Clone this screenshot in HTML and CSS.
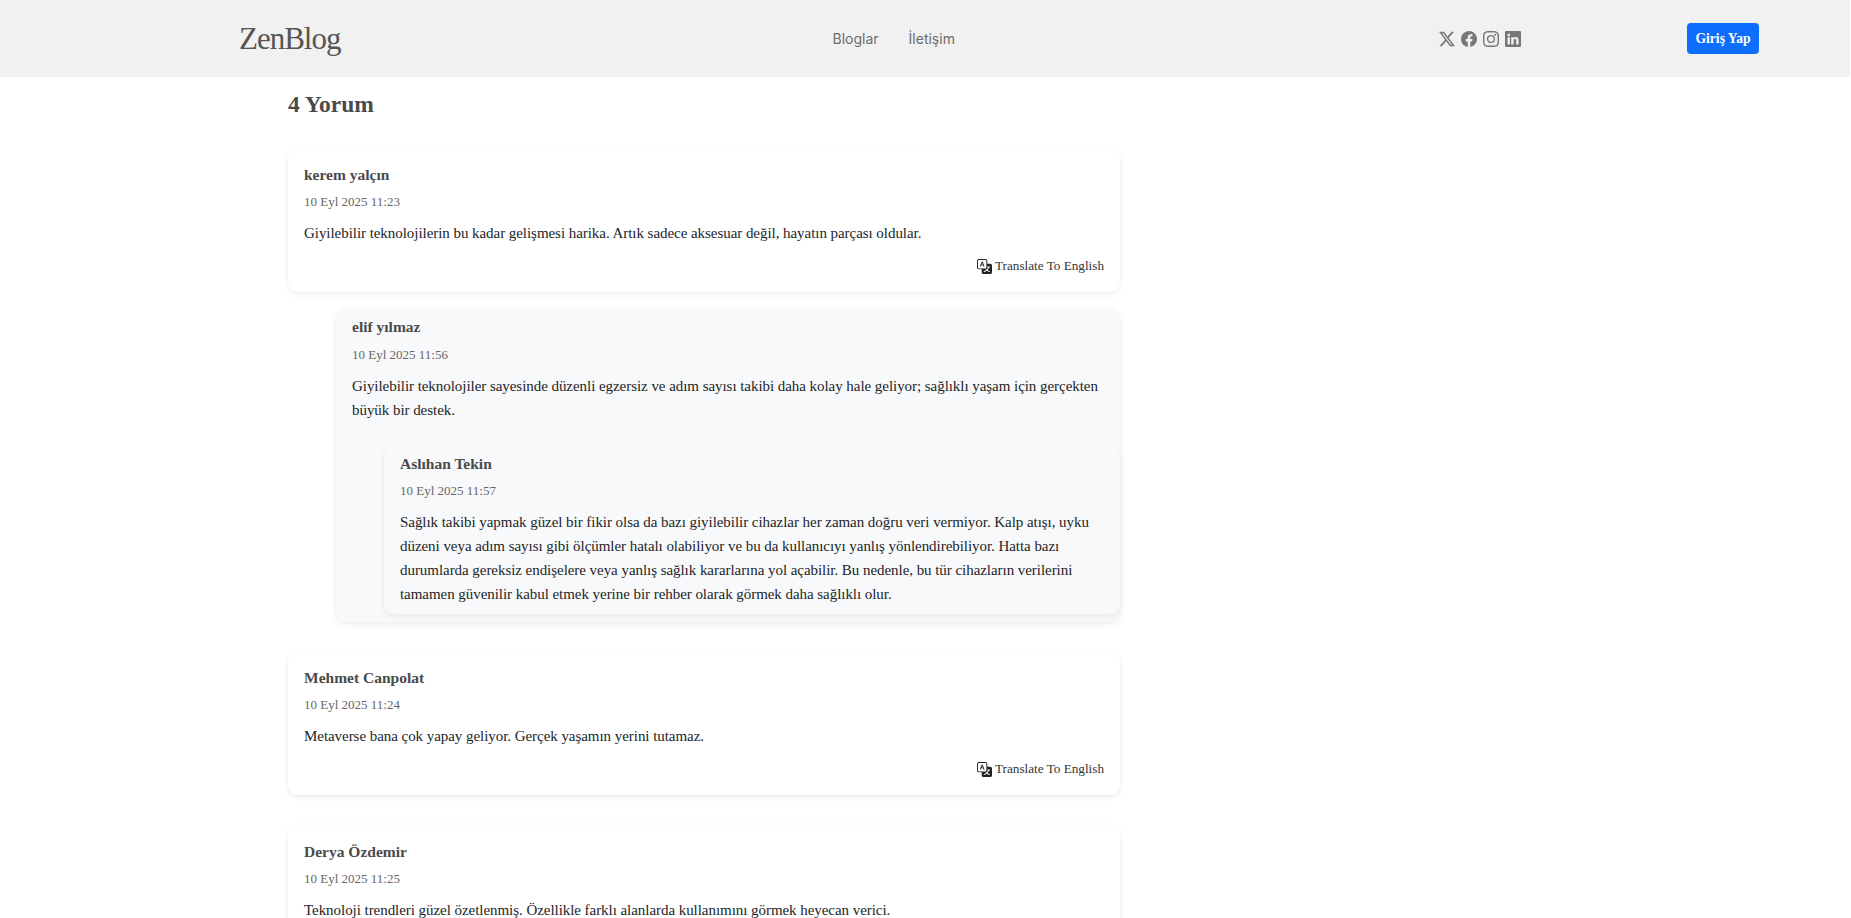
FILE: index.html
```html
<!DOCTYPE html>
<html lang="tr">
<head>
  <meta charset="UTF-8">
  <meta name="viewport" content="width=device-width, initial-scale=1.0">
  <title>ZenBlog</title>
  <link rel="stylesheet" href="styles.css">
</head>
<body>

<header class="site-header">
  <a class="logo" href="#">ZenBlog</a>
  <nav class="main-nav">
    <a href="#">Bloglar</a>
    <a href="#">İletişim</a>
  </nav>
  <div class="social">
    <a href="#" aria-label="X"><svg viewBox="0 0 16 16"><path d="M12.6.75h2.454l-5.36 6.142L16 15.25h-4.937l-3.867-5.07-4.425 5.07H.316l5.733-6.57L0 .75h5.063l3.495 4.633L12.601.75Zm-.86 13.028h1.36L4.323 2.145H2.865z"/></svg></a>
    <a href="#" aria-label="Facebook"><svg viewBox="0 0 16 16"><path d="M16 8.049c0-4.446-3.582-8.05-8-8.05C3.58 0-.002 3.603-.002 8.05c0 4.017 2.926 7.347 6.75 7.951v-5.625h-2.03V8.05H6.75V6.275c0-2.017 1.195-3.131 3.022-3.131.876 0 1.791.157 1.791.157v1.98h-1.009c-.993 0-1.303.621-1.303 1.258v1.51h2.218l-.354 2.326H9.25V16c3.824-.604 6.75-3.934 6.75-7.951"/></svg></a>
    <a href="#" aria-label="Instagram"><svg viewBox="0 0 16 16"><path d="M8 0C5.829 0 5.556.01 4.703.048 3.85.088 3.269.222 2.76.42a3.9 3.9 0 0 0-1.417.923A3.9 3.9 0 0 0 .42 2.76C.222 3.268.087 3.85.048 4.7.01 5.555 0 5.827 0 8.001c0 2.172.01 2.444.048 3.297.04.852.174 1.433.372 1.942.205.526.478.972.923 1.417.444.445.89.719 1.416.923.51.198 1.09.333 1.942.372C5.555 15.99 5.827 16 8 16s2.444-.01 3.298-.048c.851-.04 1.434-.174 1.943-.372a3.9 3.9 0 0 0 1.416-.923c.445-.445.718-.891.923-1.417.197-.509.332-1.09.372-1.942C15.99 10.445 16 10.173 16 8s-.01-2.445-.048-3.299c-.04-.851-.175-1.433-.372-1.941a3.9 3.9 0 0 0-.923-1.417A3.9 3.9 0 0 0 13.24.42c-.51-.198-1.092-.333-1.943-.372C10.443.01 10.172 0 7.998 0zm-.717 1.442h.718c2.136 0 2.389.007 3.232.046.78.035 1.204.166 1.486.275.373.145.64.319.92.599s.453.546.598.92c.11.281.24.705.275 1.485.039.843.047 1.096.047 3.231s-.008 2.389-.047 3.232c-.035.78-.166 1.203-.275 1.485a2.5 2.5 0 0 1-.599.919c-.28.28-.546.453-.92.598-.28.11-.704.24-1.485.276-.843.038-1.096.047-3.232.047s-2.39-.009-3.233-.047c-.78-.036-1.203-.166-1.485-.276a2.5 2.5 0 0 1-.92-.598 2.5 2.5 0 0 1-.6-.92c-.109-.281-.24-.705-.275-1.485-.038-.843-.046-1.096-.046-3.233s.008-2.388.046-3.231c.036-.78.166-1.204.276-1.486.145-.373.319-.64.599-.92s.546-.453.92-.598c.282-.11.705-.24 1.485-.276.738-.034 1.024-.044 2.515-.045zm4.988 1.328a.96.96 0 1 0 0 1.92.96.96 0 0 0 0-1.92m-4.27 1.122a4.109 4.109 0 1 0 0 8.217 4.109 4.109 0 0 0 0-8.217m0 1.441a2.667 2.667 0 1 1 0 5.334 2.667 2.667 0 0 1 0-5.334"/></svg></a>
    <a href="#" aria-label="LinkedIn"><svg viewBox="0 0 16 16"><path d="M0 1.146C0 .513.526 0 1.175 0h13.65C15.474 0 16 .513 16 1.146v13.708c0 .633-.526 1.146-1.175 1.146H1.175C.526 16 0 15.487 0 14.854zm4.943 12.248V6.169H2.542v7.225zm-1.2-8.212c.837 0 1.358-.554 1.358-1.248-.015-.709-.52-1.248-1.342-1.248S2.4 3.226 2.4 3.934c0 .694.521 1.248 1.327 1.248zm4.908 8.212V9.359c0-.216.016-.432.08-.586.173-.431.568-.878 1.232-.878.869 0 1.216.662 1.216 1.634v3.865h2.401V9.25c0-2.22-1.184-3.252-2.764-3.252-1.274 0-1.845.7-2.165 1.193v.025h-.016l.016-.025V6.169h-2.4c.03.678 0 7.225 0 7.225z"/></svg></a>
  </div>
  <button class="login-btn">Giriş Yap</button>
</header>

<main class="comments">
  <h2 class="comments-title">4 Yorum</h2>

  <article class="comment">
    <h3 class="comment-name">kerem yalçın</h3>
    <div class="comment-date">10 Eyl 2025 11:23</div>
    <p class="comment-text">Giyilebilir teknolojilerin bu kadar gelişmesi harika. Artık sadece aksesuar değil, hayatın parçası oldular.</p>
    <div class="translate">
      <a href="#"><svg viewBox="0 0 16 16"><path d="M4.545 6.714 4.11 8H3l1.862-5h1.284L8 8H6.833l-.435-1.286zm1.634-.736L5.5 3.956h-.049l-.679 2.022z"/><path d="M0 2a2 2 0 0 1 2-2h7a2 2 0 0 1 2 2v3h3a2 2 0 0 1 2 2v7a2 2 0 0 1-2 2H7a2 2 0 0 1-2-2v-3H2a2 2 0 0 1-2-2zm2-1a1 1 0 0 0-1 1v7a1 1 0 0 0 1 1h7a1 1 0 0 0 1-1V2a1 1 0 0 0-1-1zm7.138 9.995q.289.451.63.846c-.748.575-1.673 1.001-2.768 1.292.178.217.451.635.555.867 1.125-.359 2.08-.844 2.886-1.494.777.665 1.739 1.165 2.93 1.472.133-.254.414-.673.629-.89-1.125-.253-2.057-.694-2.82-1.284.681-.747 1.222-1.651 1.621-2.757H14V8h-3v1.047h.765c-.318.844-.74 1.546-1.272 2.13a6 6 0 0 1-.415-.492 2 2 0 0 1-.94.31"/></svg>Translate To English</a>
    </div>
  </article>

  <article class="comment reply">
    <h3 class="comment-name">elif yılmaz</h3>
    <div class="comment-date">10 Eyl 2025 11:56</div>
    <p class="comment-text">Giyilebilir teknolojiler sayesinde düzenli egzersiz ve adım sayısı takibi daha kolay hale geliyor; sağlıklı yaşam için gerçekten büyük bir destek.</p>

    <article class="comment nested">
      <h3 class="comment-name">Aslıhan Tekin</h3>
      <div class="comment-date">10 Eyl 2025 11:57</div>
      <p class="comment-text">Sağlık takibi yapmak güzel bir fikir olsa da bazı giyilebilir cihazlar her zaman doğru veri vermiyor. Kalp atışı, uyku düzeni veya adım sayısı gibi ölçümler hatalı olabiliyor ve bu da kullanıcıyı yanlış yönlendirebiliyor. Hatta bazı durumlarda gereksiz endişelere veya yanlış sağlık kararlarına yol açabilir. Bu nedenle, bu tür cihazların verilerini tamamen güvenilir kabul etmek yerine bir rehber olarak görmek daha sağlıklı olur.</p>
    </article>
  </article>

  <article class="comment">
    <h3 class="comment-name">Mehmet Canpolat</h3>
    <div class="comment-date">10 Eyl 2025 11:24</div>
    <p class="comment-text">Metaverse bana çok yapay geliyor. Gerçek yaşamın yerini tutamaz.</p>
    <div class="translate">
      <a href="#"><svg viewBox="0 0 16 16"><path d="M4.545 6.714 4.11 8H3l1.862-5h1.284L8 8H6.833l-.435-1.286zm1.634-.736L5.5 3.956h-.049l-.679 2.022z"/><path d="M0 2a2 2 0 0 1 2-2h7a2 2 0 0 1 2 2v3h3a2 2 0 0 1 2 2v7a2 2 0 0 1-2 2H7a2 2 0 0 1-2-2v-3H2a2 2 0 0 1-2-2zm2-1a1 1 0 0 0-1 1v7a1 1 0 0 0 1 1h7a1 1 0 0 0 1-1V2a1 1 0 0 0-1-1zm7.138 9.995q.289.451.63.846c-.748.575-1.673 1.001-2.768 1.292.178.217.451.635.555.867 1.125-.359 2.08-.844 2.886-1.494.777.665 1.739 1.165 2.93 1.472.133-.254.414-.673.629-.89-1.125-.253-2.057-.694-2.82-1.284.681-.747 1.222-1.651 1.621-2.757H14V8h-3v1.047h.765c-.318.844-.74 1.546-1.272 2.13a6 6 0 0 1-.415-.492 2 2 0 0 1-.94.31"/></svg>Translate To English</a>
    </div>
  </article>

  <article class="comment">
    <h3 class="comment-name">Derya Özdemir</h3>
    <div class="comment-date">10 Eyl 2025 11:25</div>
    <p class="comment-text">Teknoloji trendleri güzel özetlenmiş. Özellikle farklı alanlarda kullanımını görmek heyecan verici.</p>
  </article>
</main>

</body>
</html>
```

FILE: styles.css
```css
* {
  box-sizing: border-box;
}

body {
  font-family: "Liberation Serif", serif;
  background-color: #fff;
  color: #212529;
  margin: 0;
  height: 100vh;
  overflow: hidden;
}

a {
  color: inherit;
  text-decoration: none;
}

.site-header {
  display: flex;
  align-items: center;
  height: 77px;
  width: 1850px;
  padding: 0 91px 0 239px;
  background-color: #f1f1f1;
}

.logo {
  font-size: 31px;
  letter-spacing: -1px;
  color: #555;
}

.main-nav {
  display: flex;
  gap: 30px;
  margin-left: 492px;
  font-family: Inter, sans-serif;
  font-size: 14px;
  color: #6c6c6c;
}

.social {
  display: flex;
  gap: 6px;
  margin-left: auto;
  margin-right: 166px;
}

.social a {
  display: block;
  width: 16px;
  height: 16px;
}

.social svg {
  display: block;
  width: 16px;
  height: 16px;
  fill: #777;
}

.login-btn {
  width: 72px;
  height: 31px;
  padding: 0;
  border: none;
  border-radius: 4px;
  background-color: #0d6efd;
  color: #fff;
  font-family: inherit;
  font-size: 13.6px;
  font-weight: bold;
}

.comments {
  width: 832px;
  margin-left: 288px;
}

.comments-title {
  margin: 13px 0 30px;
  font-size: 23.5px;
  line-height: 28px;
  color: #4a4a4a;
}

.comment {
  margin-bottom: 30px;
  padding: 17px 16px 16px;
  border-radius: 10px;
  background-color: #fff;
  box-shadow: 0 2px 6px rgba(0, 0, 0, 0.08);
}

.comment-name {
  margin: 0 0 7px;
  font-size: 15.5px;
  line-height: 20px;
  color: #4a4a4a;
}

.comment-date {
  margin-bottom: 9px;
  font-size: 13px;
  line-height: 20px;
  color: #666;
}

.comment-text {
  margin: 0;
  font-size: 15px;
  letter-spacing: -0.05px;
  line-height: 24px;
  color: #212529;
}

.translate {
  display: flex;
  justify-content: flex-end;
  margin-top: 11px;
  font-size: 13.2px;
  line-height: 20px;
  color: #333;
}

.translate a {
  display: flex;
  align-items: center;
  gap: 3px;
}

.translate svg {
  width: 15px;
  height: 15px;
  fill: #222;
}

.reply {
  margin: -14px 0 29px 48px;
  padding: 9px 0 8px 16px;
  background-color: #f8f9fa;
}

.reply > .comment-name {
  margin-bottom: 8px;
}

.reply > .comment-text {
  padding-right: 16px;
}

.nested {
  margin: 24px 0 0 32px;
  padding: 8px 16px;
  background-color: #f8f9fa;
}
```
